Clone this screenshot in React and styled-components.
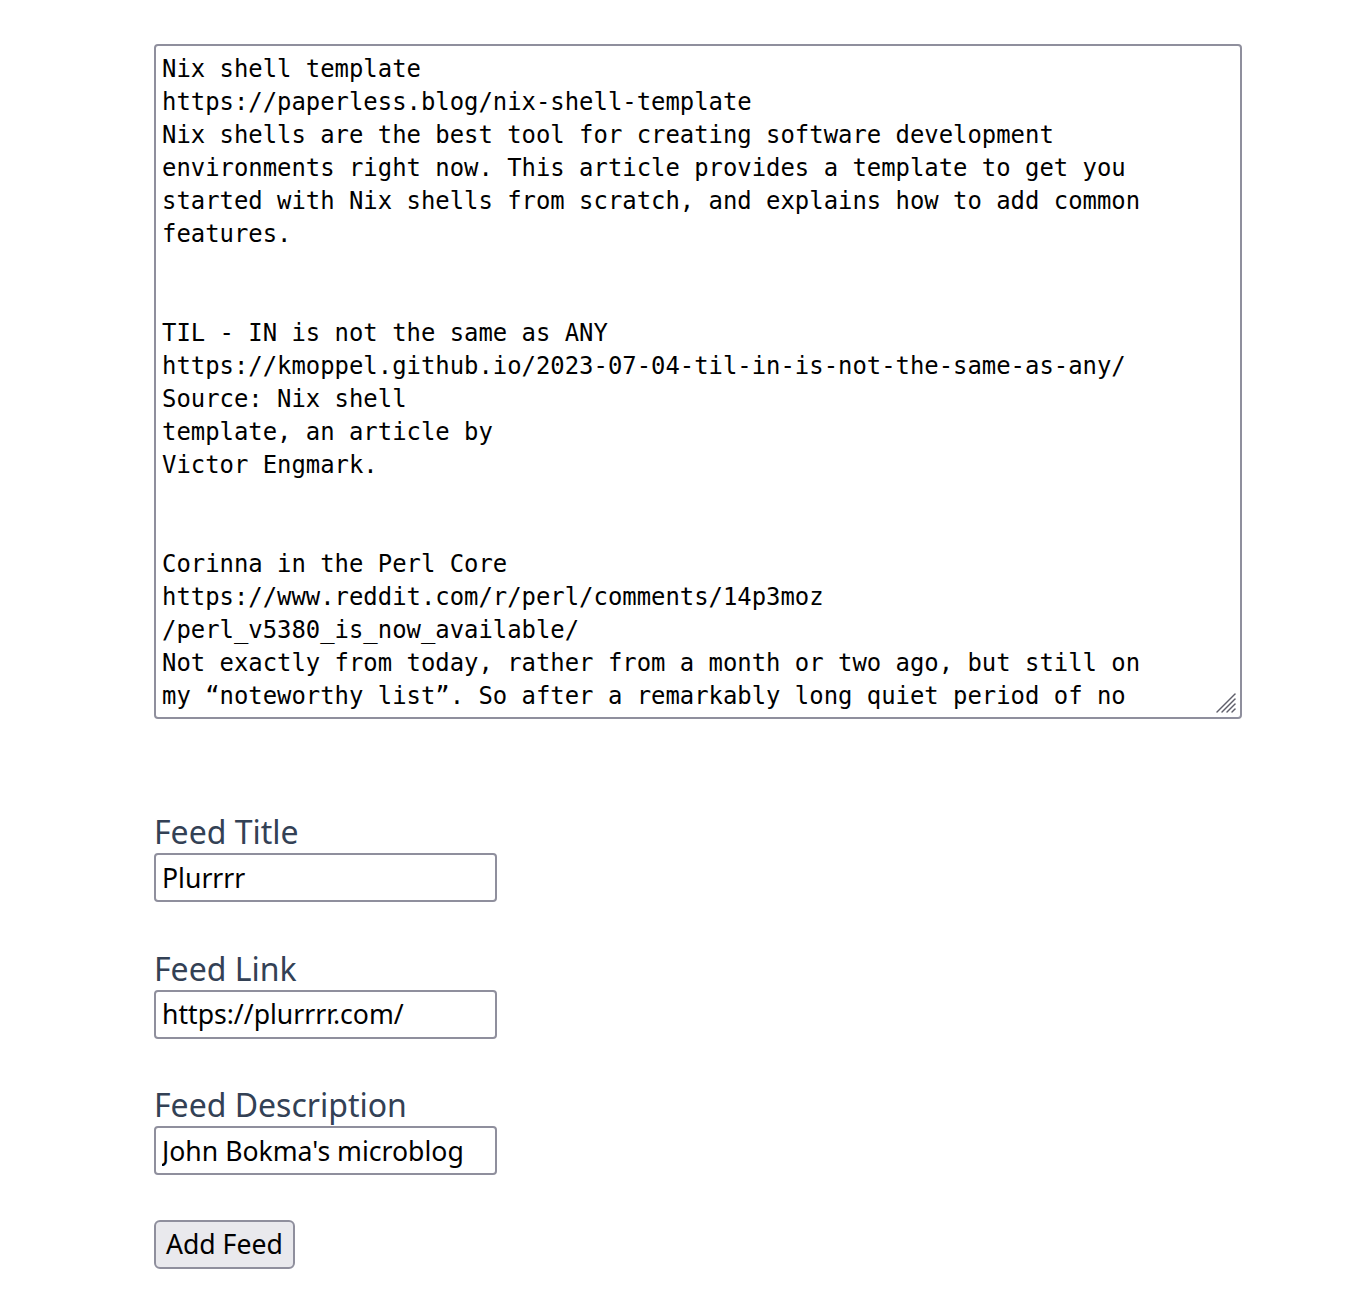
import React from "react";
import styled, { createGlobalStyle } from "styled-components";

const GlobalStyle = createGlobalStyle`
  html, body {
    margin: 0;
    padding: 0;
    background: #ffffff;
  }
  body {
    font-family: "Noto Sans", "Open Sans", sans-serif;
  }
`;

const Page = styled.div`
  display: flex;
  flex-direction: column;
  align-items: flex-start;
  padding: 44px 0 24px 154px;
`;

const FeedWrap = styled.div`
  position: relative;
  display: flex;
`;

const Feed = styled.textarea`
  box-sizing: border-box;
  width: 1088px;
  height: 675px;
  padding: 7px 6px 6px;
  border: 2px solid #8f8f9d;
  border-radius: 4px;
  font-family: "DejaVu Sans Mono", "Liberation Mono", monospace;
  font-size: 23.9px;
  line-height: 33px;
  color: #000;
  background: #fff;
  white-space: pre;
  overflow: hidden;
  resize: none;
  outline: none;
`;

const Grip = styled.svg`
  position: absolute;
  right: 5px;
  bottom: 5px;
  width: 22px;
  height: 22px;
  pointer-events: none;
`;

const Form = styled.form`
  display: flex;
  flex-direction: column;
  align-items: flex-start;
  gap: 44.5px;
  margin-top: 91px;
`;

const Field = styled.div`
  display: flex;
  flex-direction: column;
  align-items: flex-start;
`;

const Label = styled.label`
  font-family: "Noto Sans", sans-serif;
  font-size: 32px;
  line-height: normal;
  color: #334155;
`;

const Input = styled.input`
  box-sizing: border-box;
  width: 343px;
  height: 49px;
  padding: 2px 6px;
  border: 2px solid #8f8f9d;
  border-radius: 4px;
  font-family: "Noto Sans", sans-serif;
  font-size: 26.6px;
  color: #000;
  background: #fff;
  outline: none;
`;

const Button = styled.button`
  box-sizing: border-box;
  height: 49px;
  padding: 0 10px;
  border: 2px solid #8f8f9d;
  border-radius: 6px;
  background: #e9e9ed;
  font-family: "Noto Sans", sans-serif;
  font-size: 26.6px;
  color: #000;
  cursor: pointer;
`;

const feedText = `Nix shell template
https://paperless.blog/nix-shell-template
Nix shells are the best tool for creating software development
environments right now. This article provides a template to get you
started with Nix shells from scratch, and explains how to add common
features.


TIL - IN is not the same as ANY
https://kmoppel.github.io/2023-07-04-til-in-is-not-the-same-as-any/
Source: Nix shell
template, an article by
Victor Engmark.


Corinna in the Perl Core
https://www.reddit.com/r/perl/comments/14p3moz
/perl_v5380_is_now_available/
Not exactly from today, rather from a month or two ago, but still on
my “noteworthy list”. So after a remarkably long quiet period of no
new features, Perl gets a class system in its core.
`;

const fields = [
  { id: "title", label: "Feed Title", value: "Plurrrr" },
  { id: "link", label: "Feed Link", value: "https://plurrrr.com/" },
  { id: "description", label: "Feed Description", value: "John Bokma's microblog" },
];

function App() {
  return (
    <>
      <GlobalStyle />
      <Page>
        <FeedWrap>
          <Feed defaultValue={feedText} spellCheck={false} />
          <Grip viewBox="0 0 22 22">
            <g stroke="#5f5f6a" strokeWidth="1.5" strokeLinecap="round">
              <line x1="2" y1="20" x2="20" y2="2" />
              <line x1="7" y1="20" x2="20" y2="7" />
              <line x1="12" y1="20" x2="20" y2="12" />
              <line x1="17" y1="20" x2="20" y2="17" />
            </g>
          </Grip>
        </FeedWrap>
        <Form onSubmit={(e) => e.preventDefault()}>
          {fields.map((f) => (
            <Field key={f.id}>
              <Label htmlFor={f.id}>{f.label}</Label>
              <Input id={f.id} type="text" defaultValue={f.value} />
            </Field>
          ))}
          <Button type="submit">Add Feed</Button>
        </Form>
      </Page>
    </>
  );
}

export default App;
